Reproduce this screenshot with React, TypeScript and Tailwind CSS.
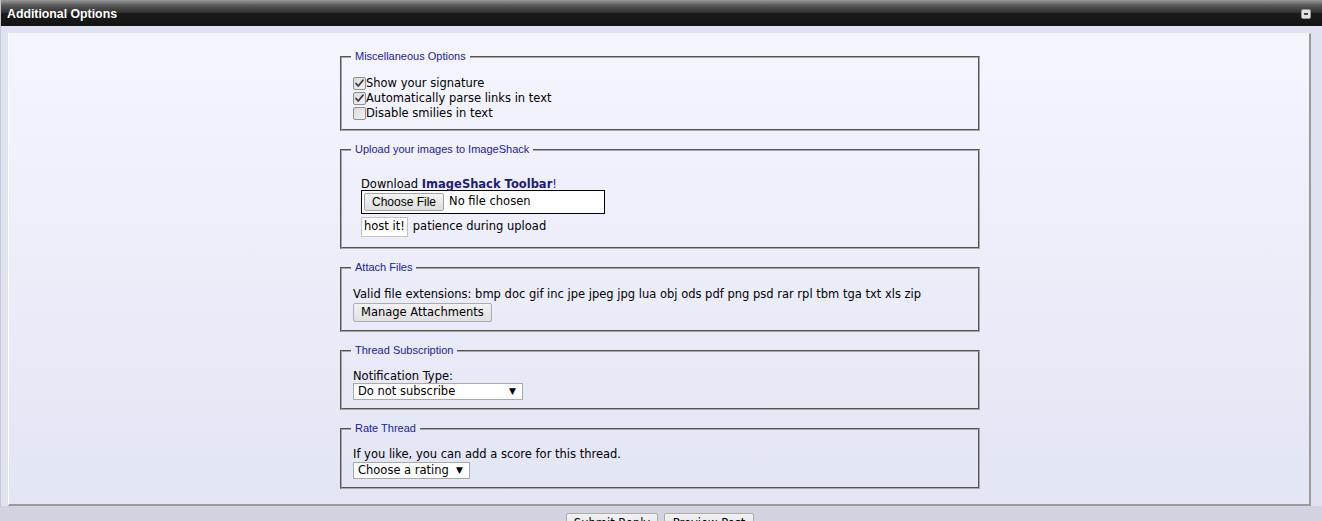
import type { ReactNode } from 'react';

const body = "font-['DejaVu_Sans',Verdana,sans-serif]";
const legendFont = "font-['Liberation_Sans',Tahoma,Arial,sans-serif]";

function CheckBox({ checked }: { checked: boolean }) {
  return (
    <svg width="13" height="13" viewBox="0 0 13 13" className="shrink-0">
      <defs>
        <linearGradient id="cbg" x1="0" y1="0" x2="1" y2="1">
          <stop offset="0" stopColor="#d9d9d9" />
          <stop offset="1" stopColor="#f4f4f4" />
        </linearGradient>
      </defs>
      <rect x="0.5" y="0.5" width="12" height="12" rx="1.5" fill="url(#cbg)" stroke="#8f8f8f" />
      {checked && (
        <path d="M3 6.5 L5.2 9 L10 3.2" fill="none" stroke="#3a3a3a" strokeWidth="1.8" strokeLinecap="round" strokeLinejoin="round" />
      )}
    </svg>
  );
}

function Section({ title, children }: { title: string; children: ReactNode }) {
  return (
    <fieldset className="mx-auto w-[640px] border-2 [border-style:groove] border-[#a8a8a8] px-[11px] pt-[13px] pb-[8px]">
      <legend className={`${legendFont} -ml-[2px] px-[4px] text-[11px] leading-[13px] text-[#22229c]`}>{title}</legend>
      {children}
    </fieldset>
  );
}

function FakeSelect({ width, value }: { width: string; value: string }) {
  return (
    <div
      className={`${width} flex h-[17px] items-center justify-between border border-[#a9a9a9] bg-white pl-[4px] pr-[6px] text-black`}
    >
      <span>{value}</span>
      <span className="text-[9px] leading-none">▼</span>
    </div>
  );
}

const options = [
  { label: 'Show your signature', checked: true },
  { label: 'Automatically parse links in text', checked: true },
  { label: 'Disable smilies in text', checked: false },
];

export default function App() {
  return (
    <div className={`min-h-screen bg-[#d1d3e0] ${body} text-[11.5px] text-black`}>
      <div className="border-l border-[#c4c7d4] bg-[#dfe2f0]">
        <div className="flex h-[26px] items-center justify-between bg-[linear-gradient(to_bottom,#9a9a9a_0%,#5a5a5a_20%,#2e2e2e_50%,#1a1a1a_50%,#141414_100%)] pl-[6px] pr-[11px] pt-[2px]">
          <span className={`${legendFont} text-[12.3px] font-bold text-white`}>Additional Options</span>
          <span className="flex h-[10px] w-[10px] items-center justify-center rounded-[2px] border border-[#9a9a9a] bg-[#e2e2e2]">
            <span className="h-[2px] w-[4px] bg-[#444]" />
          </span>
        </div>

        <div className="pl-[7px] pr-[11px] pt-[7px]">
          <div className="flex flex-col gap-[12px] border-t border-l border-t-[#f2f2f6] border-l-white border-r-2 border-b-2 border-r-[#9a9a9a] border-b-[#9a9a9a] bg-linear-to-b from-[#f5f5fe] to-[#e2e5f4] pl-[2px] pt-[16px] pb-[15px]">
            <Section title="Miscellaneous Options">
              {options.map((o) => (
                <label key={o.label} className="flex h-[15px] items-center">
                  <CheckBox checked={o.checked} />
                  <span className="leading-[15px]">{o.label}</span>
                </label>
              ))}
            </Section>

            <Section title="Upload your images to ImageShack">
              <div className="pl-[8px] pt-[9px] pb-[2px]">
                <div className="h-[12px] leading-[12px]">
                  Download <b className="text-[#1c1c78]">ImageShack Toolbar</b>
                  <span className="text-[#22229c]">!</span>
                </div>
                <div className="flex h-[24px] w-[244px] items-center border border-black bg-white pl-[2px]">
                  <span className="flex h-[18px] items-center rounded-[2px] border border-[#a3a3a3] bg-linear-to-b from-[#f4f4f4] to-[#dedede] px-[7px] font-['Liberation_Sans',Arial,sans-serif] text-[12px]">
                    Choose File
                  </span>
                  <span className="ml-[5px]">No file chosen</span>
                </div>
                <div className="mt-[3px] flex h-[20px] items-center">
                  <span className="flex h-[20px] items-center border border-[#c6c6c6] bg-white px-[2px]">host it!</span>
                  <span className="ml-[5px]">patience during upload</span>
                </div>
              </div>
            </Section>

            <Section title="Attach Files">
              <div className="leading-[15px]">
                Valid file extensions: bmp doc gif inc jpe jpeg jpg lua obj ods pdf png psd rar rpl tbm tga txt xls zip
              </div>
              <button
                type="button"
                className="mt-[1px] flex h-[19px] items-center rounded-[2px] border border-[#acacac] bg-linear-to-b from-[#f2f2f2] to-[#e0e0e0] px-[7px]"
              >
                Manage Attachments
              </button>
            </Section>

            <Section title="Thread Subscription">
              <div className="leading-[13px]">Notification Type:</div>
              <FakeSelect width="w-[170px]" value="Do not subscribe" />
            </Section>

            <Section title="Rate Thread">
              <div className="leading-[13px]">If you like, you can add a score for this thread.</div>
              <div className="mt-[1px]">
                <FakeSelect width="w-[117px]" value="Choose a rating" />
              </div>
            </Section>
          </div>
        </div>
      </div>

      <div className="mt-[7px] flex justify-center gap-[6px] pr-[2px]">
        <button
          type="button"
          className="h-[22px] w-[92px] rounded-[2px] border border-[#acacac] bg-linear-to-b from-[#f2f2f2] to-[#e0e0e0]"
        >
          Submit Reply
        </button>
        <button
          type="button"
          className="h-[22px] w-[90px] rounded-[2px] border border-[#acacac] bg-linear-to-b from-[#f2f2f2] to-[#e0e0e0]"
        >
          Preview Post
        </button>
      </div>
    </div>
  );
}
